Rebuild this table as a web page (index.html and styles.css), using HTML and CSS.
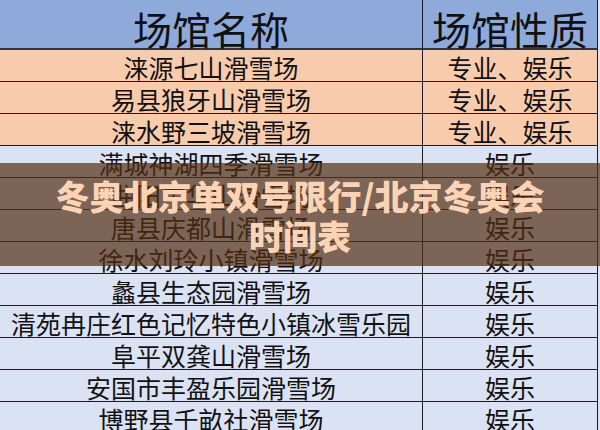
FILE: index.html
```html
<!DOCTYPE html>
<html lang="zh">
<head>
<meta charset="utf-8">
<link rel="stylesheet" href="styles.css">
</head>
<body>
<div class="page">
  <div class="table">
    <div class="cell head name">场馆名称</div>
    <div class="cell head kind">场馆性质</div>

    <div class="cell pro name">涞源七山滑雪场</div>
    <div class="cell pro kind">专业、娱乐</div>
    <div class="cell pro name">易县狼牙山滑雪场</div>
    <div class="cell pro kind">专业、娱乐</div>
    <div class="cell pro name">涞水野三坡滑雪场</div>
    <div class="cell pro kind">专业、娱乐</div>

    <div class="cell fun name">满城神湖四季滑雪场</div>
    <div class="cell fun kind">娱乐</div>
    <div class="cell fun name">曲阳中华山滑雪场</div>
    <div class="cell fun kind">娱乐</div>
    <div class="cell fun name">唐县庆都山滑雪场</div>
    <div class="cell fun kind">娱乐</div>
    <div class="cell fun name">徐水刘玲小镇滑雪场</div>
    <div class="cell fun kind">娱乐</div>
    <div class="cell fun name">蠡县生态园滑雪场</div>
    <div class="cell fun kind">娱乐</div>
    <div class="cell fun name">清苑冉庄红色记忆特色小镇冰雪乐园</div>
    <div class="cell fun kind">娱乐</div>
    <div class="cell fun name">阜平双龚山滑雪场</div>
    <div class="cell fun kind">娱乐</div>
    <div class="cell fun name">安国市丰盈乐园滑雪场</div>
    <div class="cell fun kind">娱乐</div>
    <div class="cell fun name">博野县千畝社滑雪场</div>
    <div class="cell fun kind">娱乐</div>
  </div>
  <div class="banner">
    <h1 class="title">冬奥北京单双号限行/北京冬奥会<br>时间表</h1>
  </div>
</div>
</body>
</html>
```

FILE: styles.css
```css
html, body {
  margin: 0;
  padding: 0;
  background: #dae2f3;
}
.page {
  position: relative;
  width: 600px;
  height: 430px;
  overflow: hidden;
  font-family: "Noto Sans CJK SC", "Noto Sans", sans-serif;
}
.table {
  display: grid;
  grid-template-columns: 422px 176px;
  grid-template-rows: 50px repeat(12, 32px);
  width: 600px;
}
.cell {
  display: flex;
  align-items: center;
  justify-content: center;
  box-sizing: border-box;
  border-bottom: 1px solid #1c1c24;
  color: #111;
  font-size: 25px;
  line-height: 1;
  white-space: nowrap;
  padding-top: 3px;
}
.kind {
  border-left: 1px solid #1c1c24;
  border-right: 1px solid #1c1c24;
}
.head {
  background: #8eaadb;
  font-size: 39px;
  padding-top: 8px;
  border-bottom: 2px solid #2e3440;
}
.pro {
  background: #f8cbad;
}
.fun {
  background: #dae2f3;
}
.banner {
  position: absolute;
  left: 0;
  top: 163px;
  width: 600px;
  height: 103px;
  background: rgba(84, 47, 19, 0.7);
  display: flex;
  align-items: center;
  justify-content: center;
}
.title {
  margin: 0;
  text-align: center;
  color: #fcd4b5;
  font-size: 34px;
  font-weight: 900;
  line-height: 40px;
  padding-top: 2px;
}
```
